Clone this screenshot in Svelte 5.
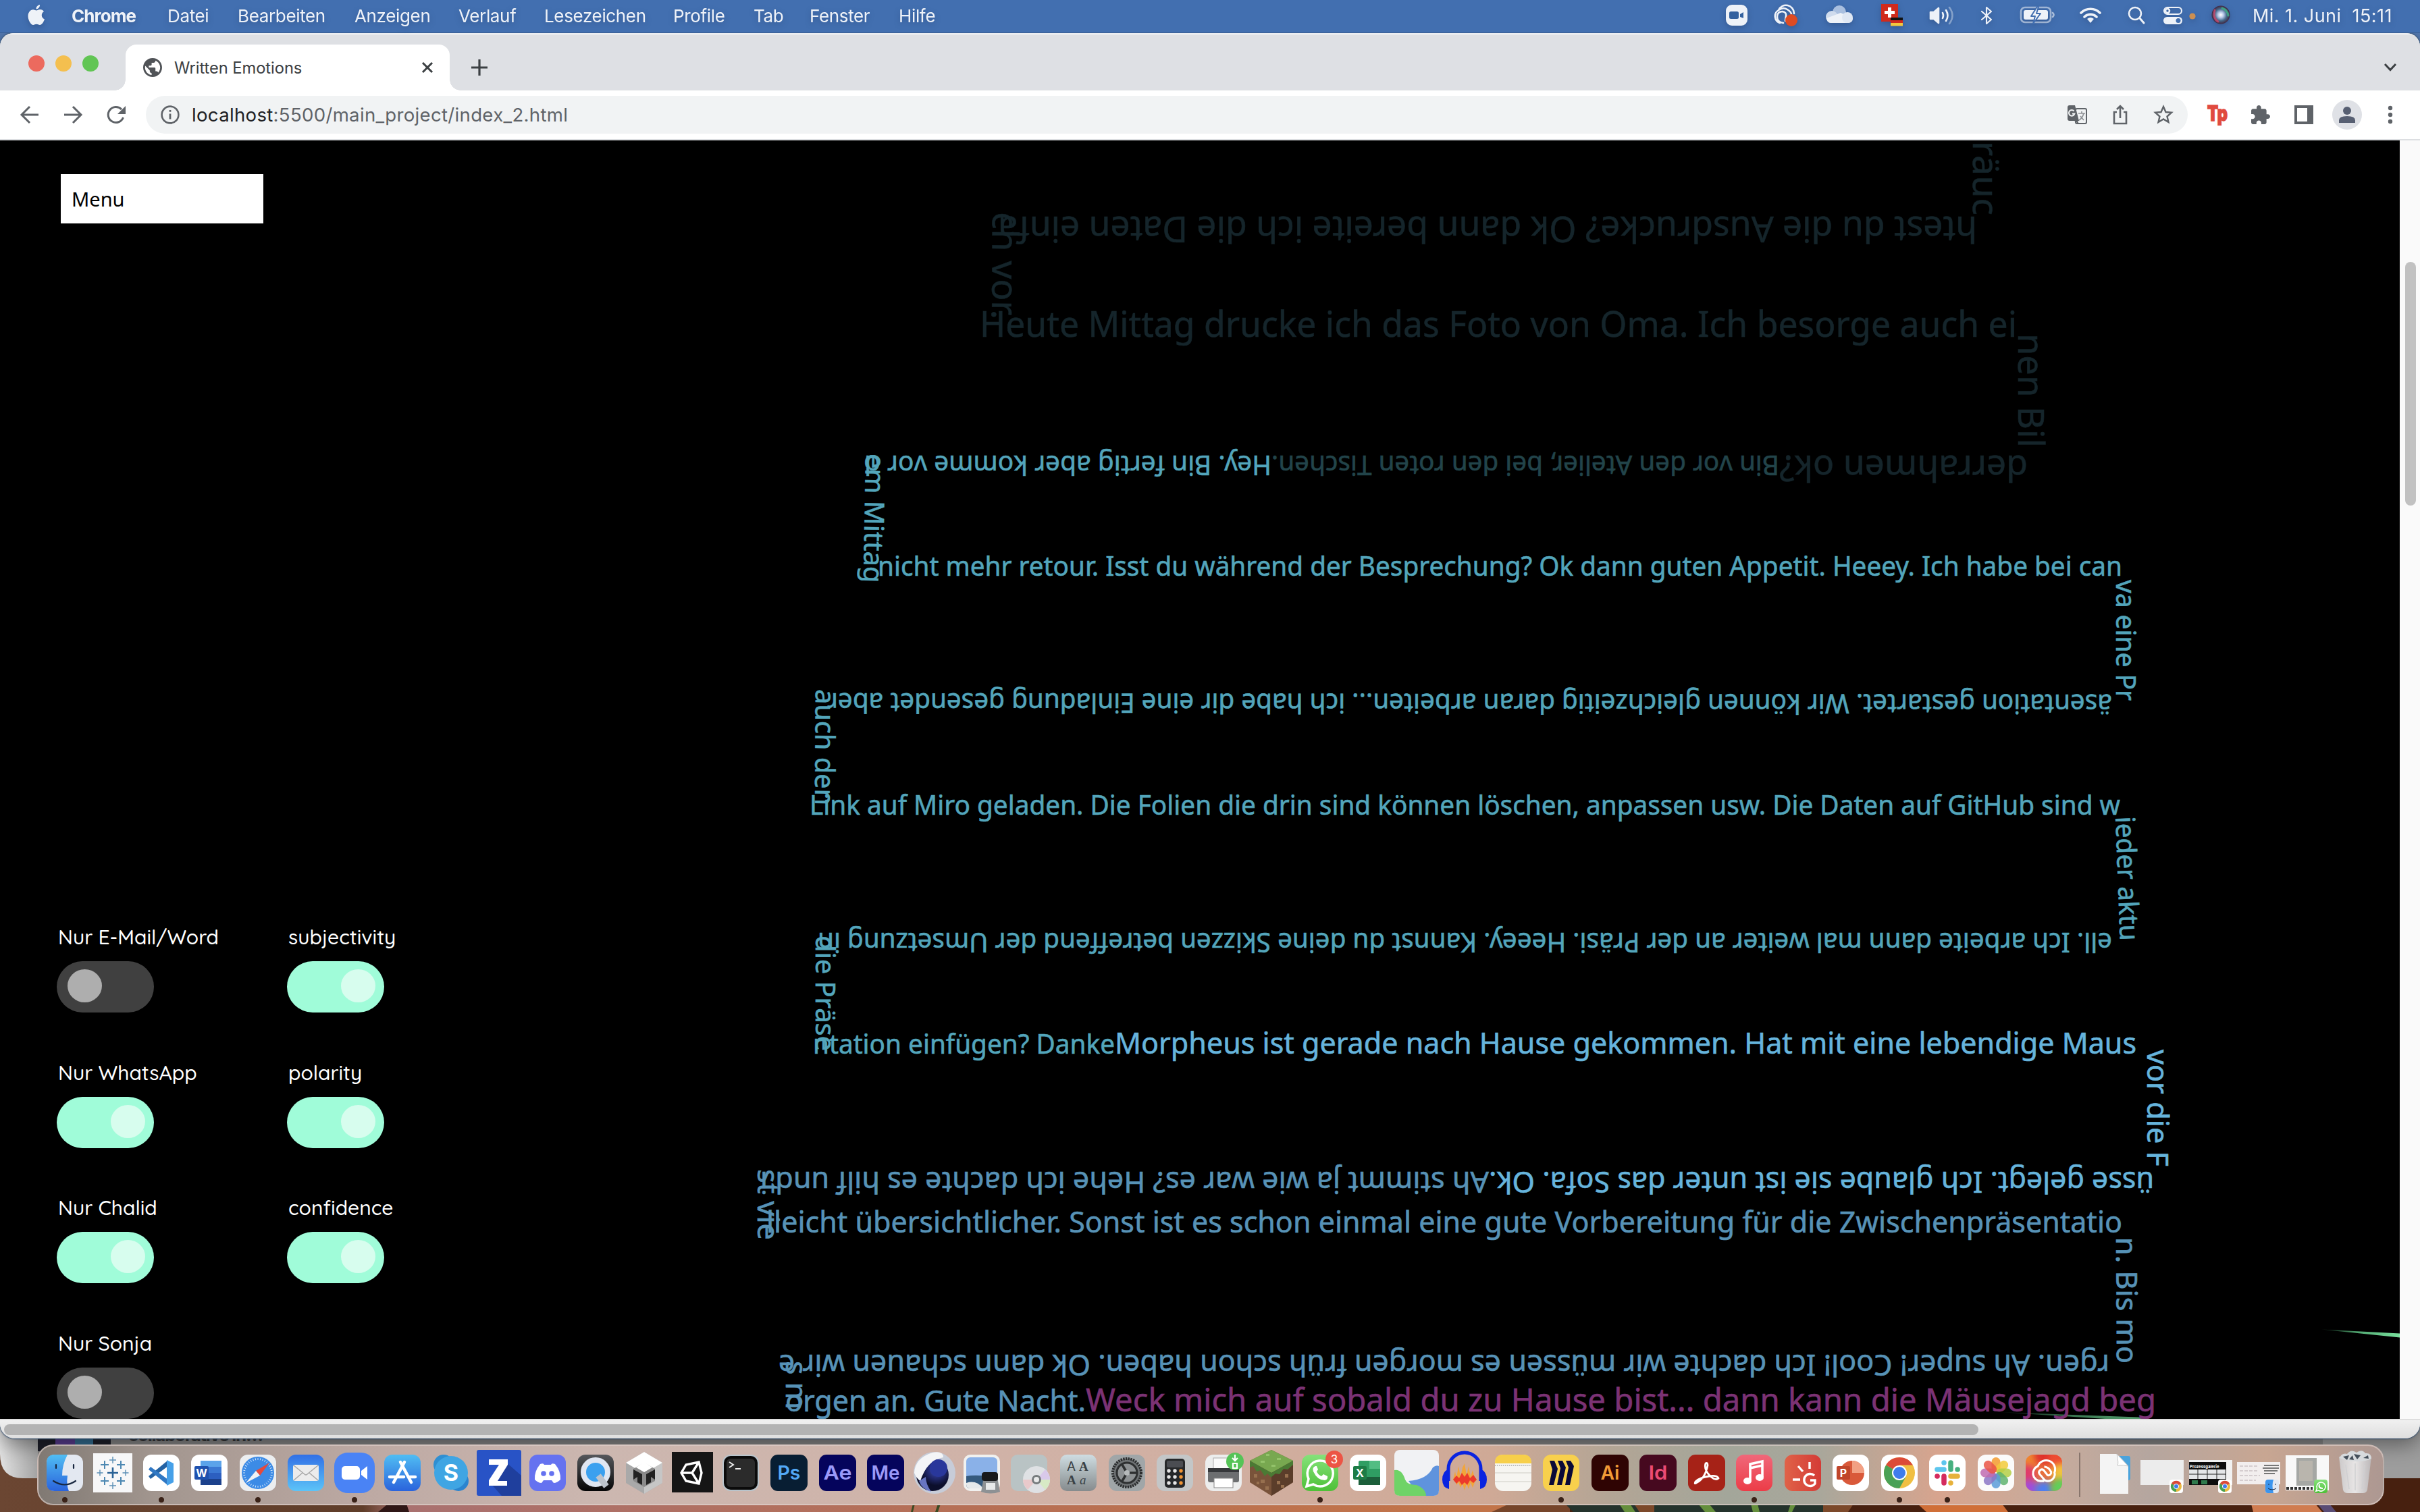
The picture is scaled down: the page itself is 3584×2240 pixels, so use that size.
<script lang="ts">
  const menus = [
    ['Datei', 104], ['Bearbeiten', 173], ['Anzeigen', 154], ['Verlauf', 127], ['Lesezeichen', 191],
    ['Profile', 119], ['Tab', 83], ['Fenster', 132], ['Hilfe', 80],
  ] as [string, number][];

  // Status items, each with the width of its slot
  const status = [
    ['zoom', 64], ['cc', 76], ['cloud', 88], ['flag', 68], ['volume', 78], ['bluetooth', 56],
    ['battery', 94], ['wifi', 64], ['search', 72], ['control', 36], ['dot', 22], ['siri', 62],
  ] as [string, number][];

  const toggles = [
    ['Nur E-Mail/Word', false], ['subjectivity', true],
    ['Nur WhatsApp', true], ['polarity', true],
    ['Nur Chalid', true], ['confidence', true],
    ['Nur Sonja', false],
  ] as [string, boolean][];

  const dark = '#15252b', moss = '#22444a', teal = '#53a5bb', sky = '#66b4dc', steel = '#5792b6', plum = '#7b3274';

  // Text runs on the canvas: start point, end point, size, colour, text
  const runs = [
    [2922, 209, 2922, 319, 53, dark, 'räuc'],
    [2928, 321, 1478, 321, 53, dark, 'htest du die Ausdrucke? Ok dann bereite ich die Daten einfa'],
    [1470, 314, 1469, 473, 53, dark, 'ch vor.'],
    [1451, 499, 2987, 499, 53, dark, 'Heute Mittag drucke ich das Foto von Oma. Ich besorge auch ei'],
    [2989, 494, 2989, 663, 53, dark, 'nen Bil'],
    [3003, 675, 2635, 675, 53, dark, 'derrahmen ok?'],
    [2635, 675, 1883, 675, 40, moss, 'Bin vor den Atelier, bei den roten Tischen.'],
    [1883, 675, 1280, 675, 40, teal, 'Hey. Bin fertig aber komme vor d'],
    [1282, 672, 1279, 863, 40, teal, 'em Mittag'],
    [1300, 853, 3143, 853, 40, teal, 'nicht mehr retour. Isst du während der Besprechung? Ok dann guten Appetit. Heeey. Ich habe bei can'],
    [3134, 859, 3134, 1038, 40, teal, 'va eine Pr'],
    [3128, 1029, 1225, 1027, 40, teal, 'äsentation gestartet. Wir können gleichzeitig daran arbeiten... ich habe dir eine Einladung gesendet aber'],
    [1208, 1021, 1207, 1193, 40, teal, 'auch den'],
    [1199, 1207, 3140, 1207, 40, teal, 'Link auf Miro geladen. Die Folien die drin sind können löschen, anpassen usw. Die Daten auf GitHub sind w'],
    [3133, 1210, 3140, 1394, 40, teal, 'ieder aktu'],
    [3128, 1382, 1211, 1382, 40, teal, 'ell. Ich arbeite dann mal weiter an der Präsi. Heeey. Kannst du deine Skizzen betreffend der Umsetzung in'],
    [1208, 1386, 1208, 1557, 40, teal, 'die Präse'],
    [1204, 1561, 1651, 1561, 40, teal, 'ntation einfügen? Danke'],
    [1651, 1561, 3164, 1561, 43, sky, 'Morpheus ist gerade nach Hause gekommen. Hat mit eine lebendige Maus'],
    [3180, 1555, 3180, 1728, 43, sky, 'vor die F'],
    [3190, 1736, 2205, 1736, 43, sky, 'üsse gelegt. Ich glaube sie ist unter das Sofa. Ok.'],
    [2205, 1736, 1126, 1736, 43, steel, 'Ah stimmt ja wie war es? Hehe ich dachte es hilf und i'],
    [1122, 1732, 1122, 1837, 43, steel, 'st vie'],
    [1135, 1826, 3143, 1826, 43, steel, 'lleicht übersichtlicher. Sonst ist es schon einmal eine gute Vorbereitung für die Zwischenpräsentatio'],
    [3134, 1833, 3135, 2020, 43, steel, 'n. Bis mo'],
    [3124, 2007, 1153, 2007, 43, steel, 'rgen. Ah super! Cool! Ich dachte wir müssen es morgen früh schon haben. Ok dann schauen wir e'],
    [1164, 2016, 1164, 2088, 43, steel, 's m'],
    [1163, 2091, 1608, 2091, 43, steel, 'orgen an. Gute Nacht.'],
    [1608, 2091, 3193, 2091, 48, plum, 'Weck mich auf sobald du zu Hause bist... dann kann die Mäusejagd beg'],
  ].map(([x, y, x2, y2, size, color, text]: any) => ({
    x, y, size, color, text,
    len: Math.hypot(x2 - x, y2 - y),
    angle: (Math.atan2(y2 - y, x2 - x) * 180) / Math.PI,
  }));

  const apps = [
    'finder', 'tableau', 'vscode', 'word', 'safari', 'mail', 'zoom', 'appstore', 'skype', 'zed', 'discord',
    'quicktime', 'unityhub', 'unity', 'terminal', 'Ps', 'Ae', 'Me', 'c4d', 'preview', 'dvd', 'fontbook',
    'settings', 'calc', 'printer', 'minecraft', 'whatsapp', 'excel', 'chart', 'audacity', 'notes', 'miro',
    'Ai', 'Id', 'acrobat', 'music', 'grammar', 'powerpoint', 'chrome', 'slack', 'photos', 'creative',
  ];
  const running = ['finder', 'vscode', 'safari', 'zoom', 'whatsapp', 'miro', 'music', 'chrome', 'slack'];
  const recent = ['file', 'win1', 'win2', 'win3', 'win4', 'trash'];
  const adobe: Record<string, [string, string]> = {
    Ps: ['#081e33', '#52a8f5'], Ae: ['#05045c', '#9a99f8'], Me: ['#05045c', '#9a99f8'],
    Ai: ['#2f0403', '#f29a36'], Id: ['#46091f', '#ec4b73'],
  };
  const ticks = Array.from({ length: 36 }, (_, i) => i * 10);
  const petals = ['#f39a2d', '#f2ca3a', '#b4cf45', '#5fb36f', '#5a9bd8', '#8b76c5', '#c06bb0', '#ea5546'];
  const glows = [
    [12, 12, '#f0862e'], [36, 6, '#e0302c'], [58, 10, '#ee4a30'], [10, 34, '#e03a6a'], [62, 32, '#f2c23c'],
    [14, 56, '#a44ad8'], [36, 58, '#4f7df0'], [60, 54, '#5fd05a'],
  ] as [number, number, string][];
  const crosses = [
    [36, 32, 8, '#2a6295', 2.6], [24, 20, 6, '#4d88b2', 2], [48, 20, 6, '#4d88b2', 2], [24, 44, 6, '#4d88b2', 2], [48, 44, 6, '#4d88b2', 2],
    [36, 13, 5, '#5b8fb5', 1.4], [36, 51, 5, '#5b8fb5', 1.4], [17, 32, 4.5, '#5b8fb5', 1.4], [55, 32, 4.5, '#5b8fb5', 1.4],
  ] as [number, number, number, string, number][];
</script>

<div class="desktop">
  <svg class="wallpaper" viewBox="0 0 3584 2240" aria-hidden="true">
    <defs>
      <linearGradient id="ground"><stop offset="0" stop-color="#6b4632" /><stop offset=".15" stop-color="#5f3d29" /><stop offset=".166" stop-color="#a97170" /><stop offset=".4" stop-color="#b66f55" /><stop offset=".6" stop-color="#c27449" /></linearGradient>
      <linearGradient id="behind" x2="1"><stop offset="0" stop-color="#e2e2e2" /><stop offset="1" stop-color="#a2a2a2" /></linearGradient>
      <linearGradient id="blue" x2="0" y2="1"><stop offset="0" stop-color="#50bdf3" /><stop offset="1" stop-color="#2a63dc" /></linearGradient>
      <linearGradient id="blueUp" x2="0" y2="1"><stop offset="0" stop-color="#3270e6" /><stop offset="1" stop-color="#5cc4f8" /></linearGradient>
      <linearGradient id="steelGrad" x2="0" y2="1"><stop offset="0" stop-color="#cfdde2" /><stop offset="1" stop-color="#858b8d" /></linearGradient>
      <linearGradient id="black" x2="0" y2="1"><stop offset="0" stop-color="#56585c" /><stop offset="1" stop-color="#050506" /></linearGradient>
      <linearGradient id="green" x2="0" y2="1"><stop offset="0" stop-color="#86e27b" /><stop offset="1" stop-color="#4dc037" /></linearGradient>
      <linearGradient id="red" x2="0" y2="1"><stop offset="0" stop-color="#f0687a" /><stop offset="1" stop-color="#ec3c47" /></linearGradient>
      <linearGradient id="coral" x2="1"><stop offset="0" stop-color="#e06248" /><stop offset="1" stop-color="#d43b36" /></linearGradient>
      <radialGradient id="orb" cx=".62" cy=".35" r=".6"><stop offset="0" stop-color="#6f83e8" /><stop offset=".35" stop-color="#27307e" /><stop offset=".8" stop-color="#0c0f2c" /></radialGradient>
      <radialGradient id="siri"><stop offset="0" stop-color="#fff" /><stop offset=".3" stop-color="#b9c9e8" /><stop offset=".65" stop-color="#456a8c" /><stop offset="1" stop-color="#41263f" /></radialGradient>
      <linearGradient id="streak"><stop offset="0" stop-color="#5fd08a" stop-opacity=".15" /><stop offset=".5" stop-color="#6ad893" stop-opacity=".8" /><stop offset="1" stop-color="#78e09c" /></linearGradient>
      <linearGradient id="trash" x2="1"><stop offset="0" stop-color="#cfcfd1" /><stop offset=".5" stop-color="#eeeeef" /><stop offset="1" stop-color="#bdbbbd" /></linearGradient>
      <clipPath id="tile"><rect x="9" y="5" width="54" height="54" rx="12" /></clipPath>
      <filter id="soft" x="-50%" y="-50%" width="200%" height="200%"><feGaussianBlur stdDeviation="5" /></filter>
    </defs>
    <rect width="3584" height="2240" fill="url(#ground)" />
    <path d="M560 2240L596 2210L606 2240Z" fill="#2f1716" />
    <path d="M1352 2228h3l-3 12h-3zM1389 2228h4l-4 12h-4z" fill="#3b4a22" />
    <path d="M2209 2240L2235 2228H2330V2240Z" fill="#76452a" />
    <rect x="2325" y="2190" width="1259" height="50" fill="#47200f" />
    <path d="M2318 2228H2700V2240H2330Z" fill="#24332c" />
    <path d="M2398 2228h16l8 12h-16zM2515 2228h16l10 12h-16zM2593 2228h10l3 12h-10zM2652 2228h8l-6 12h-6z" fill="#658f3c" />
    <path d="M2420 2228h30v12h-22zM2700 2228h45l-8 12h-37z" fill="#7c492a" />
    <path d="M2840 2228h125l9 12h-121z" fill="#d06f38" />
    <path d="M3334 2228h95l10 12h-102z" fill="#d07c50" />
    <path d="M3432 2228h18l10 12h-18z" fill="#5a4c75" />
    <rect x="0" y="22" width="3584" height="60" fill="#5379b0" />
    <path d="M0 2080H56V2190H34Q0 2190 0 2154Z" fill="url(#behind)" />
    <rect x="56" y="2080" width="3528" height="110" fill="#838383" />
    <rect x="3440" y="2080" width="144" height="110" fill="#9d9d9d" />
    <rect x="56" y="2080" width="108" height="70" fill="#1d1e28" />
    <rect x="82" y="2120" width="29" height="30" fill="#563a8c" /><rect x="111" y="2120" width="27" height="30" fill="#326a8d" />
    <text x="190" y="2135" font-size="26" font-weight="700" fill="#333" textLength="200">collaborative in…</text>
  </svg>

  <header class="menubar">
    <svg class="apple" viewBox="0 0 28 34"><path fill="#eef2f8" d="M19 1c.3 3-2.300 6.500-5.500 6.500C13.200 4.500 16 1.300 19 1zM14 9.500c1.300 0 3-1.500 5.500-1.500 2.200 0 4.300 1.200 5.500 3-4.800 3-4 9.500 1 11.500-1 3-3.700 8.500-7 8.500-2 0-2.800-1.200-5-1.200S11 31 9.200 31C5.500 31 1.500 23.500 1.500 18c0-5.800 3.600-9.800 7.500-9.800 2.200 0 3.800 1.300 5 1.300z" /></svg>
    <b>Chrome</b>
    {#each menus as [label, w]}<span class="menu" style:width="{w}px">{label}</span>{/each}
    <div class="status">
      {#each status as [name, w]}
        <svg width={w} height="50" viewBox="{-w / 2} -25 {w} 50" fill="none" stroke="#eef2f8" stroke-width="2.600" stroke-linecap="round" stroke-linejoin="round">
          {#if name === 'zoom'}
            <rect x="-16" y="-16" width="32" height="31" rx="9" fill="#eef2f8" stroke="none" /><rect x="-11" y="-6" width="14" height="11" rx="2.500" fill="#33619f" stroke="none" /><path d="M5-2L10-5V4L5 2Z" fill="#33619f" stroke="none" />
          {:else if name === 'cc'}
            <path d="M-6 11A10.500 10.500 0 0 1-8-8A12 12 0 0 1 15-3M-1 11Q-10 10-10 2T-2-6Q4-5 3 1T2 8M-8-8Q-1-13 5-9T11-2" /><circle cx="11" cy="7" r="9" fill="#de4b22" stroke="none" />
          {:else if name === 'cloud'}
            <g stroke="none"><circle cx="0" cy="-5" r="10" fill="#a9bfdf" /><circle cx="-11" cy="2" r="9" fill="#cfdbed" /><path d="M-19 4L2-4L20 4Q20 11 13 11H-13Q-18 11-19 4Z" fill="#eef2f8" /><circle cx="12" cy="3" r="8" fill="#dfe7f3" /></g>
          {:else if name === 'flag'}
            <g stroke="none"><rect x="-16" y="-17" width="25" height="26" fill="#d02a1c" /><path d="M-6-12h5v5h5v5h-5v5h-5v-5h-5v-5h5z" fill="#fff" /><rect x="-2" y="3" width="18" height="4.500" fill="#111" /><rect x="-2" y="7" width="18" height="4.500" fill="#cf2a1e" /><rect x="-2" y="11" width="18" height="4.500" fill="#f3c83e" /></g>
          {:else if name === 'volume'}
            <path d="M-16-5H-11L-4-11V11L-11 5H-16Z" fill="#eef2f8" /><path d="M2-4Q4 0 2 4M7-8Q12 0 7 8" /><path d="M12-12Q21 0 12 12" opacity=".4" />
          {:else if name === 'bluetooth'}
            <path d="M-7-6L7 6L0 12V-12L7-6L-7 6" stroke-width="2.200" />
          {:else if name === 'battery'}
            <rect x="-24" y="-12" width="44" height="22" rx="6" stroke-opacity=".55" /><rect x="-20" y="-8" width="36" height="14" rx="3" fill="#eef2f8" stroke="none" /><path d="M23-4Q26-1 23 2" stroke-opacity=".6" /><path d="M0-13L-9 1H-3L-6 12L5-3H-1L2-13Z" fill="#eef2f8" stroke="#426fb0" stroke-width="2" />
          {:else if name === 'wifi'}
            <path d="M-14-4A20 20 0 0 1 14-4M-9 2A13 13 0 0 1 9 2" stroke-width="3.600" /><path d="M0 11L-5 5Q0 1 5 5Z" fill="#eef2f8" stroke="none" />
          {:else if name === 'search'}
            <circle cx="-2" cy="-3" r="9" /><path d="M5 4L11 11" stroke-width="3" />
          {:else if name === 'control'}
            <rect x="-13" y="-12" width="26" height="10" rx="5" stroke-width="2.200" /><circle cx="-8" cy="-7" r="3" /><rect x="-14" y="2" width="28" height="11" rx="5.500" fill="#eef2f8" stroke="none" /><circle cx="8" cy="7.500" r="3.500" fill="#426fb0" stroke="none" />
          {:else if name === 'dot'}
            <circle cx="0" cy="1" r="4.600" fill="#cc8f51" stroke="none" />
          {:else}
            <circle cx="0" cy="-1" r="13.500" fill="url(#siri)" stroke="none" /><path d="M-9-8Q-12 4-4 9" stroke="#e0456b" stroke-width="3" opacity=".7" /><path d="M2-11Q10-8 11 0" stroke="#3fbf8a" stroke-width="3" opacity=".7" />
          {/if}
        </svg>
      {/each}
      <span class="clock"><span>Mi. 1. Juni</span><span>15:11</span></span>
    </div>
  </header>

  <main class="window">
    <div class="tabs">
      <div class="lights"><i class="close"></i><i class="min"></i><i class="max"></i></div>
      <div class="tab">
        <svg width="28" height="28" viewBox="2 2 20 20"><path fill="#505357" d="M12 2C6.480 2 2 6.480 2 12s4.480 10 10 10 10-4.480 10-10S17.520 2 12 2zm-1 17.930c-3.950-.490-7-3.850-7-7.930 0-.620.080-1.210.210-1.790L9 15v1c0 1.100.900 2 2 2v1.930zm6.900-2.540c-.260-.810-1-1.390-1.900-1.390h-1v-3c0-.550-.450-1-1-1H8v-2h2c.550 0 1-.450 1-1V7h2c1.100 0 2-.900 2-2v-.410c2.930 1.190 5 4.060 5 7.410 0 2.080-.800 3.970-2.100 5.390z" /></svg>
        <span>Written Emotions</span>
        <svg class="x" width="18" height="18" viewBox="0 0 18 18"><path d="M2 2L16 16M16 2L2 16" stroke="#3c4043" stroke-width="3" /></svg>
      </div>
      <svg class="plus" width="26" height="26" viewBox="0 0 26 26"><path d="M13 1V25M1 13H25" stroke="#3c4043" stroke-width="3.200" /></svg>
      <svg class="chev" width="20" height="14" viewBox="0 0 20 14"><path d="M2 2L10 10.500L18 2" stroke="#3c4043" stroke-width="3" fill="none" /></svg>
    </div>

    <div class="toolbar">
      <svg class="nav" viewBox="-32 -32 64 64"><path d="M13 0H-12M0-12L-12 0L0 12" /></svg>
      <svg class="nav" viewBox="-32 -32 64 64"><path d="M-13 0H12M0-12L12 0L0 12" /></svg>
      <svg class="nav" viewBox="-32 -32 64 64"><path d="M10.500 4A11.500 11.500 0 1 1 8-8" /><path d="M14-13V-1H2Z" fill="#5f6368" stroke="none" /></svg>
      <div class="omnibox">
        <svg width="28" height="28" viewBox="0 0 28 28"><circle cx="14" cy="14" r="12.400" fill="none" stroke="#5f6368" stroke-width="2.600" /><path d="M14 12.500V20.500M14 7V9.800" stroke="#5f6368" stroke-width="2.800" /></svg>
        <span class="url"><em>localhost</em>:5500/main_project/index_2.html</span>
        <svg class="act" viewBox="-32 -32 64 64"><rect x="-2" y="-9" width="16" height="22" rx="2" fill="none" stroke="#5f6368" stroke-width="2" /><path d="M-11-14H-3L3 9H-11Q-14 9-14 6V-11Q-14-14-11-14Z" fill="#5f6368" stroke="none" /><path d="M1 9H-4L3 14Z" fill="#5f6368" stroke="none" /><path d="M-4.500-5.500A4.300 4.300 0 1 0-3.600-1.500H-7" stroke="#f1f3f4" stroke-width="2" /><path d="M2-2H12M7-5V-2M10-2Q8 5 3 8M5 2L10 8" stroke-width="1.700" class="gt" /></svg>
        <svg class="act" viewBox="-32 -32 64 64"><path d="M-5-4H-9V13H9V-4H5M0 5V-12M-5-8L0-13L5-8" stroke-width="2.600" /></svg>
        <svg class="act" viewBox="-32 -32 64 64"><path d="M0-12L3.500-4L12-3.200L5.500 2.500L7.500 11L0 6.500L-7.500 11L-5.500 2.500L-12-3.200L-3.500-4Z" stroke-width="2.400" /></svg>
      </div>
      <svg class="act" viewBox="-32 -32 64 64"><text x="-15" y="9" font-size="31" font-weight="900" fill="#e04a3f" stroke="#e04a3f" stroke-width="1.500" textLength="30" lengthAdjust="spacingAndGlyphs">Tp</text></svg>
      <svg class="act" viewBox="-32 -32 64 64"><path fill="#5f6368" stroke="none" transform="scale(1.330) translate(-12.500 -11.500)" d="M20.500 11H19V7c0-1.100-.900-2-2-2h-4V3.500C13 2.120 11.880 1 10.500 1S8 2.120 8 3.500V5H4c-1.100 0-1.990.900-1.990 2v3.800H3.500c1.490 0 2.700 1.210 2.700 2.700s-1.210 2.700-2.700 2.700H2V20c0 1.100.900 2 2 2h3.800v-1.500c0-1.490 1.210-2.700 2.700-2.700 1.490 0 2.700 1.210 2.700 2.700V22H17c1.100 0 2-.900 2-2v-4h1.500c1.380 0 2.500-1.120 2.500-2.500S21.880 11 20.500 11z" /></svg>
      <svg class="act" viewBox="-32 -32 64 64"><path fill="#5f6368" fill-rule="evenodd" stroke="none" d="M-14-14H14V14H-14ZM-10-10V10H5V-10Z" /></svg>
      <svg class="act" viewBox="-32 -32 64 64"><circle r="22" fill="#dfe1e6" stroke="none" /><circle cy="-6" r="6" fill="#575f72" stroke="none" /><path d="M-12 12V8Q-12 2 0 2T12 8V12Z" fill="#575f72" stroke="none" /></svg>
      <svg class="act" viewBox="-32 -32 64 64"><g fill="#5f6368" stroke="none"><circle cy="-10" r="3.200" /><circle r="3.200" /><circle cy="10" r="3.200" /></g></svg>
    </div>

    <div class="view">
      <section class="page">
        <svg class="canvas" viewBox="0 208 3554 1894">
          <path d="M3438 1969.500L3554 1975.500V1981.500Z" fill="url(#streak)" />
          <path d="M2962 2092L3180 2100V2106Z" fill="url(#streak)" opacity=".7" />
          {#each runs as r}
            <text transform="translate({r.x} {r.y}) rotate({r.angle})" font-size={r.size} fill={r.color} stroke={r.color} stroke-width=".6" textLength={r.len} lengthAdjust="spacingAndGlyphs">{r.text}</text>
          {/each}
        </svg>
        <aside class="panel">
          <div class="select">Menu</div>
          <div class="switches">
            {#each toggles as [label, on]}
              <div class="switch" class:on>
                <span>{label}</span>
                <div class="track"><i></i></div>
              </div>
            {/each}
          </div>
        </aside>
      </section>
      <div class="vbar"><i></i></div>
    </div>
    <div class="hbar"><i></i></div>
  </main>

  <nav class="dock">
    {#each apps as app}
      <div class="app">
        <svg width="72" height="64" viewBox="0 0 72 64">
          {#if adobe[app]}
            <rect x="9" y="5" width="55" height="54" rx="11" fill={adobe[app][0]} /><text x="36.500" y="42" text-anchor="middle" font-size="29" font-weight="600" fill={adobe[app][1]} textLength={app[1] === 'e' ? 42 : app[1] === 's' ? 34 : 28} lengthAdjust="spacingAndGlyphs">{app}</text>
          {:else if app === 'finder'}
            <rect x="9" y="5" width="54" height="54" rx="12" fill="#e3e8f1" /><path d="M21 5H40Q32 20 32 36H40Q38 50 42 59H21Q9 59 9 47V17Q9 5 21 5Z" fill="url(#blue)" /><path d="M23 20V25M49 20V25M19 44Q36 55 52 44" fill="none" stroke="#17263f" stroke-width="2.200" stroke-linecap="round" />
          {:else if app === 'tableau'}
            <rect x="7" y="3" width="58" height="58" fill="#f7f7f8" />
            {#each crosses as [x, y, r, c, w]}<path d="M{x - r} {y}H{x + r}M{x} {y - r}V{y + r}" stroke={c} stroke-width={w} />{/each}
          {:else if app === 'vscode'}
            <rect x="9" y="5" width="54" height="54" rx="12" fill="#fff" /><path d="M45 14L17 37L20 41L46 22Z" fill="#2362a3" /><path d="M45 50L17 27L20 23L46 42Z" fill="#3078c4" /><path d="M44 13L54 18V46L44 51Z" fill="#46a0e8" />
          {:else if app === 'word'}
            <rect x="9" y="5" width="54" height="54" rx="12" fill="#fff" /><rect x="23" y="14" width="31" height="36" rx="2" fill="#2c5fc0" /><rect x="23" y="14" width="31" height="9" fill="#5ba3ea" /><rect x="23" y="23" width="31" height="9" fill="#3b78d3" /><rect x="23" y="41" width="31" height="9" fill="#1c418c" /><rect x="14" y="22" width="21" height="20" rx="2" fill="#1f51ae" /><text x="24.500" y="38" text-anchor="middle" font-size="16" font-weight="700" fill="#fff">W</text>
          {:else if app === 'safari'}
            <rect x="9" y="5" width="54" height="54" rx="12" fill="#eceef0" /><circle cx="36" cy="32" r="24" fill="#3c8be6" />
            {#each ticks as a}<path d="M36 10V13" stroke="#d9eafc" stroke-width=".9" transform="rotate({a} 36 32)" />{/each}
            <path d="M53 17L39 36L33 29Z" fill="#e6493c" /><path d="M18 47L33 29L39 36Z" fill="#f1f2f4" />
          {:else if app === 'mail'}
            <rect x="9" y="5" width="54" height="54" rx="12" fill="url(#blueUp)" /><rect x="17" y="20" width="38" height="24" rx="3" fill="#ececec" /><path d="M18 21L34 34Q36 36 38 34L54 21M18 43L31 32M54 43L41 32" fill="none" stroke="#a8a8a8" stroke-width="1.500" />
          {:else if app === 'zoom'}
            <rect x="6" y="2" width="60" height="60" rx="20" fill="#4a83f5" /><rect x="17" y="22" width="27" height="20" rx="5" fill="#fff" /><path d="M46 29L55 22V42L46 35Z" fill="#fff" />
          {:else if app === 'appstore'}
            <rect x="9" y="5" width="54" height="54" rx="12" fill="url(#blue)" /><path d="M39 16L23 46M33 16L49 46M17 38H38M45 38H55" stroke="#fff" stroke-width="4.500" stroke-linecap="round" />
          {:else if app === 'skype'}
            <circle cx="25" cy="20" r="15" fill="#2f8fd2" /><circle cx="47" cy="44" r="15" fill="#2a84cf" /><circle cx="36" cy="32" r="25" fill="#3fa5e3" /><text x="36" y="44" text-anchor="middle" font-size="34" font-weight="700" fill="#fff">S</text>
          {:else if app === 'zed'}
            <rect x="3" y="-2" width="66" height="68" rx="3" fill="#2853c6" /><path d="M44 14L69 36V66H40L24 48Z" fill="#1f3f9d" /><path d="M21 12H49V20L34 44H48V51H21V43L36 20H21Z" fill="#fff" />
          {:else if app === 'discord'}
            <rect x="9" y="5" width="54" height="54" rx="12" fill="#6572f0" /><path d="M25 19Q30 17 31 20H41Q42 17 47 19Q56 30 55 42Q50 47 45 47L42 43H30L27 47Q22 47 17 42Q16 30 25 19Z" fill="#fff" /><circle cx="30" cy="33" r="3.800" fill="#6572f0" /><circle cx="42" cy="33" r="3.800" fill="#6572f0" />
          {:else if app === 'quicktime'}
            <rect x="9" y="5" width="54" height="54" rx="12" fill="url(#black)" /><circle cx="36" cy="31" r="18" fill="#3aa0ef" stroke="#dfe6f2" stroke-width="8" /><path d="M40 36L52 52" stroke="#bcc3cc" stroke-width="9" />
          {:else if app === 'unityhub'}
            <path d="M36 1L63 17V47L36 63L9 47V17Z" fill="#a9a9a9" /><path d="M36 33L63 17V47L36 63Z" fill="#c6c6c6" /><path d="M36 1L63 17L36 33L9 17Z" fill="#fff" /><path d="M36 17L52 26V44L36 53L20 44V26Z" fill="#8a8a8a" /><path d="M36 16L48 24L36 31L24 24Z" fill="#fff" /><path d="M20 27L33 34V50L26 46V38L20 42ZM52 27L39 34V50L46 46V38L52 42Z" fill="#222" />
          {:else if app === 'unity'}
            <rect x="6" y="1" width="61" height="60" fill="#151515" /><path d="M20 32L27 20L46 16L50 32L46 48L27 44ZM20 32H36M36 32L46 16M36 32L46 48" fill="none" stroke="#fff" stroke-width="3.400" />
          {:else if app === 'terminal'}
            <rect x="9" y="5" width="54" height="54" rx="12" fill="#b9c4cb" /><rect x="11" y="7" width="50" height="50" rx="10" fill="#0b0b0b" /><rect x="15" y="11" width="42" height="42" rx="6" fill="#2b2b2b" /><path d="M19 16L25 20L19 24M28 26H36" fill="none" stroke="#eee" stroke-width="2" />
          {:else if app === 'c4d'}
            <circle cx="37" cy="32" r="31" fill="#c7ccd8" /><circle cx="34" cy="35" r="24" fill="url(#orb)" /><path d="M7 32Q8 10 34 2Q50-1 50 9Q26 13 16 44Q10 40 7 32Z" fill="#f4f5f7" /><path d="M14 44Q18 56 32 60Q24 48 24 38Z" fill="#7f8ee8" opacity=".8" /><circle cx="43" cy="25" r="13" fill="#29379b" />
          {:else if app === 'preview'}
            <rect x="9" y="5" width="54" height="54" rx="10" fill="#f1f1ef" /><rect x="13" y="9" width="46" height="46" rx="6" fill="#8ab1e8" /><path d="M13 37Q25 34 59 38V49Q59 55 53 55H19Q13 55 13 49Z" fill="#355a7e" /><path d="M13 47Q28 42 38 55H19Q13 55 13 49Z" fill="#e6e9ea" /><path d="M37 34H60V44L63 60Q49 65 35 60L38 44Z" fill="#8d9194" /><rect x="36" y="31" width="24" height="13" rx="4" fill="#18191b" /><rect x="42" y="47" width="14" height="10" fill="#e7e9ea" />
          {:else if app === 'dvd'}
            <rect x="7" y="5" width="54" height="54" rx="10" fill="#b9c3c4" /><circle cx="45" cy="42" r="20" fill="#dfe1e4" /><path d="M45 42L58 27Q65 34 65 42Z" fill="#d9c9ea" /><path d="M45 42L32 57Q25 50 25 42Z" fill="#e9c9cb" /><path d="M45 42L58 57Q65 50 65 42Z" fill="#d7eac5" /><circle cx="45" cy="42" r="7" fill="#777c7e" /><circle cx="45" cy="42" r="4" fill="#e9eaea" />
          {:else if app === 'fontbook'}
            <rect x="9" y="5" width="54" height="54" rx="10" fill="url(#steelGrad)" /><g font-size="19" fill="#3b4246"><text x="19" y="29">A</text><text x="37" y="29" font-weight="700" font-family="Liberation Serif, serif">A</text><text x="19" y="49" font-weight="700" font-family="Liberation Serif, serif">A</text><text x="38" y="49" font-style="italic" font-family="Liberation Serif, serif">a</text></g>
          {:else if app === 'settings'}
            <rect x="9" y="5" width="54" height="54" rx="12" fill="#a0a6a8" /><circle cx="36" cy="32" r="21" fill="#6f7375" stroke="#2a2c2d" stroke-width="4" stroke-dasharray="2.400 1.300" /><circle cx="36" cy="32" r="15" fill="#8d9193" stroke="#2e3031" stroke-width="3" /><path d="M36 32L50 32M36 32L29 20M36 32L29 44" stroke="#2e3031" stroke-width="3.500" /><circle cx="36" cy="32" r="4" fill="#b5b9ba" />
          {:else if app === 'calc'}
            <rect x="9" y="5" width="54" height="54" rx="12" fill="#c3c6c7" /><rect x="21" y="11" width="30" height="43" rx="5" fill="#26282a" /><rect x="24" y="14" width="24" height="10" rx="2" fill="#4b4d52" />
            {#each [29, 38, 47] as y}<circle cx="27" cy={y} r="2.700" fill="#e6e6e6" /><circle cx="36" cy={y} r="2.700" fill="#e6e6e6" /><circle cx="45" cy={y} r="2.700" fill="#f09536" />{/each}
          {:else if app === 'printer'}
            <rect x="9" y="5" width="54" height="54" rx="12" fill="#eceded" /><rect x="21" y="10" width="30" height="18" fill="#fafafa" stroke="#aaa" /><rect x="13" y="25" width="46" height="21" rx="3" fill="#6c6e70" /><rect x="13" y="25" width="46" height="6" fill="#35373a" /><rect x="22" y="40" width="28" height="14" fill="#fff" stroke="#888" /><circle cx="53" cy="15" r="13" fill="#55c457" /><path d="M53 5V14M49 10L53 14L57 10M50 18H56V25H50Z" stroke="#fff" stroke-width="2.200" fill="none" />
          {:else if app === 'minecraft'}
            <path d="M36-2L68 14V46L36 66L4 46V14Z" fill="#79533a" /><path d="M36 32L68 14V46L36 66Z" fill="#5b3d2a" /><path d="M36-2L68 14L36 32L4 14Z" fill="#78a850" /><path d="M4 14L36 32V39L30 33L26 37L20 28L14 30L9 22L4 24ZM68 14L36 32V38L42 33L48 34L54 26L60 27L68 20Z" fill="#4b7a34" /><path d="M10 34h5v5h-5zM20 42h6v5h-6zM14 45h4v4h-4zM27 52h5v5h-5zM44 44h5v5h-5zM56 34h5v5h-5zM50 50h5v4h-5z" fill="#97704f" /><path d="M28 4h5v3h-5zM44 10h6v3h-6zM20 14h6v3h-6zM36 20h6v3h-6z" fill="#94c36b" />
          {:else if app === 'whatsapp'}
            <rect x="9" y="5" width="54" height="54" rx="12" fill="url(#green)" /><path d="M16 52L19 41A19 19 0 1 1 26 49Z" fill="none" stroke="#fff" stroke-width="3.500" /><path d="M29 22Q24 24 26 30Q32 43 43 43Q48 42 47 37L41 34L38 37Q33 35 31 30L33 27L31 22Z" fill="#fff" /><circle cx="57" cy="12" r="13" fill="#ec5545" /><text x="57" y="18" text-anchor="middle" font-size="17" fill="#fff">3</text>
          {:else if app === 'excel'}
            <rect x="9" y="5" width="54" height="54" rx="12" fill="#fff" /><rect x="22" y="14" width="32" height="36" rx="2" fill="#2f9e63" /><rect x="38" y="14" width="16" height="12" fill="#52bd83" /><rect x="22" y="38" width="32" height="12" fill="#1c5f3b" /><rect x="14" y="22" width="20" height="20" rx="2" fill="#1d7c46" /><text x="24" y="38" text-anchor="middle" font-size="16" font-weight="700" fill="#fff">X</text>
          {:else if app === 'chart'}
            <rect x="3" y="-2" width="66" height="68" rx="8" fill="#f1f2f4" /><path d="M69 22V58Q69 66 61 66H40L24 44Q52 42 60 24Q65 20 69 22Z" fill="#5f93dd" /><path d="M3 28Q14 26 19 42Q22 50 36 50Q50 56 50 66H11Q3 66 3 58Z" fill="#6fd367" />
          {:else if app === 'audacity'}
            <path d="M12 44V26A24 24 0 0 1 60 26V44" fill="none" stroke="#0a24e0" stroke-width="5" /><path d="M13 26Q3 30 3 42T13 56ZM59 26Q69 30 69 42T59 56Z" fill="#0a24e0" /><path d="M19 42L22 30L24 40L27 22L30 38L33 24L36 18L39 36L42 22L45 38L48 28L51 40L54 42L51 46L48 54L45 46L42 56L39 48L36 58L33 48L30 54L27 46L24 50L22 44Z" fill="#f2a53a" /><path d="M19 42L24 36L28 40L32 32L36 38L40 32L44 40L49 35L54 42L49 47L44 43L40 50L36 46L32 50L28 44L24 48Z" fill="#ec3a2b" />
          {:else if app === 'notes'}
            <rect x="9" y="5" width="54" height="54" rx="12" fill="#f6f5f1" /><path d="M9 18V17Q9 5 21 5H51Q63 5 63 17V18Z" fill="#f7cf4a" /><path d="M9 21H63" stroke="#aaa" stroke-width="1.500" stroke-dasharray="1.500 1.500" /><path d="M9 32H63M9 45H63" stroke="#dcdad4" stroke-width="1.400" />
          {:else if app === 'miro'}
            <rect x="9" y="5" width="54" height="54" rx="12" fill="#f8d04c" /><path d="M19 14H26L31 26L25 50H18L23 27ZM31 14H38L43 24L37 50H30L35 25ZM43 14H50L55 22L49 50H42L47 24Z" fill="#0a0938" />
          {:else if app === 'acrobat'}
            <rect x="9" y="5" width="55" height="54" rx="11" fill="#a62217" /><path d="M21 47Q34 41 38 21Q38 16 35 18Q32 27 42 37Q50 44 54 40Q52 35 40 37Q26 39 20 45Q18 49 21 47Z" fill="none" stroke="#fff" stroke-width="2.800" />
          {:else if app === 'music'}
            <rect x="9" y="5" width="54" height="54" rx="12" fill="url(#red)" /><path d="M30 43V19L48 15V38M30 25L48 21" fill="none" stroke="#fff" stroke-width="3.600" /><ellipse cx="26" cy="44" rx="6" ry="5" fill="#fff" /><ellipse cx="44" cy="39" rx="6" ry="5" fill="#fff" />
          {:else if app === 'grammar'}
            <rect x="9" y="5" width="54" height="54" rx="12" fill="url(#coral)" /><path d="M53 36A9 9 0 1 0 54 48V43H47M46 16V26M29 22L36 30M21 42H32" fill="none" stroke="#fff" stroke-width="3.400" />
          {:else if app === 'powerpoint'}
            <rect x="9" y="5" width="54" height="54" rx="12" fill="#fff" /><circle cx="38" cy="32" r="18" fill="#d9593a" /><path d="M38 14A18 18 0 0 1 56 32H38Z" fill="#f2a083" /><rect x="15" y="22" width="20" height="20" rx="2" fill="#c0452a" /><text x="25" y="38" text-anchor="middle" font-size="16" font-weight="700" fill="#fff">P</text>
          {:else if app === 'chrome'}
            <rect x="9" y="5" width="54" height="54" rx="12" fill="#fff" /><circle cx="36" cy="32" r="23" fill="#f0bf42" /><path d="M36 32L16.100 20.500A23 23 0 0 1 56 20.500H36Z" fill="#dc4a38" /><path d="M36 32L16.100 20.500A23 23 0 0 0 36 55L45.500 38Z" fill="#4aa155" /><circle cx="36" cy="32" r="11" fill="#fff" /><circle cx="36" cy="32" r="9" fill="#3f7cec" />
          {:else if app === 'slack'}
            <rect x="9" y="5" width="54" height="54" rx="12" fill="#fff" /><g stroke-width="7.500" stroke-linecap="round"><path d="M31 17V17.100M21 27H31" stroke="#5dc6ee" /><path d="M41 17V27M51 27H51.100" stroke="#46b07f" /><path d="M41 37H51M41 47V47.100" stroke="#e7b13b" /><path d="M21 37H21.100M31 37V47" stroke="#d42b5e" /></g>
          {:else if app === 'photos'}
            <rect x="9" y="5" width="54" height="54" rx="12" fill="#fbfbfb" />
            {#each petals as c, i}<rect x="29.500" y="9" width="13" height="22" rx="6.500" fill={c} opacity=".85" transform="rotate({i * 45} 36 32)" />{/each}
          {:else if app === 'creative'}
            <g clip-path="url(#tile)"><rect x="9" y="5" width="54" height="54" fill="#e8703c" />
              {#each glows as [x, y, c]}<circle cx={x} cy={y} r="14" fill={c} filter="url(#soft)" />{/each}
            </g>
            <path d="M37 46H30A13.500 13.500 0 0 1 26 20A15 15 0 0 1 55 31A12 12 0 0 1 43 46Q38 46 35 41L29 34A5 5 0 0 1 36 27L43 36A5 5 0 0 0 49 30Q45 22 37 21" fill="none" stroke="#fff" stroke-width="3.600" transform="translate(5 5) scale(.85)" />
          {/if}
        </svg>
        {#if running.includes(app)}<i></i>{/if}
      </div>
    {/each}
    <div class="rule"></div>
    {#each recent as item}
      <div class="app">
        <svg width="72" height="64" viewBox="0 0 72 64">
          {#if item === 'file'}
            <rect x="16" y="7" width="44" height="36" rx="3" fill="#4aa3dc" /><path d="M15 4H40L57 22V63H15Z" fill="#f4f4f4" /><path d="M40 4Q43 18 41 21Q50 20 57 22Z" fill="#fff" stroke="#c4c4c4" />
          {:else if item === 'win1'}
            <rect x="4" y="13" width="64" height="37" fill="#ececec" />
          {:else if item === 'win2'}
            <rect x="4" y="13" width="64" height="37" fill="#f1f1f1" /><rect x="4" y="16" width="55" height="34" fill="#0d0d0d" /><path d="M4 27H58V41H4Z" fill="#e4e6e8" /><path d="M17 27V41M31 27V41M45 27V41M4 34H58" stroke="#222" /><path d="M8 43h9v6H8zM22 43h9v6h-9z" fill="#2f7a4c" /><text x="5" y="25" font-size="6" font-weight="700" fill="#fff">Prozessgalerie</text>
          {:else if item === 'win3'}
            <rect x="4" y="16" width="64" height="33" fill="#f2eeee" /><path d="M8 22H36M8 29H34M8 36H38M8 43H32" stroke="#d5cdcf" stroke-width="2" stroke-dasharray="5 2" /><path d="M44 21H66M42 25H66M44 29H64M44 33H60" stroke="#777" stroke-width="1.800" />
          {:else if item === 'win4'}
            <rect x="4" y="6" width="64" height="52" fill="#f8f8f8" /><rect x="20" y="10" width="30" height="41" fill="#a5a7a4" /><rect x="24" y="14" width="20" height="30" fill="#b9b5ad" /><path d="M5 55H44" stroke="#333" stroke-width="4" stroke-dasharray="4 2" />
          {:else}
            <path d="M12 8L60 8L54 57Q53 62 47 62H25Q19 62 18 57Z" fill="url(#trash)" opacity=".9" /><path d="M13 10Q16 2 24 4Q30-4 38 2Q46-4 51 3Q60 2 60 11Q50 16 36 15T13 10Z" fill="#d7dadd" /><path d="M18 8l6 5 3-7zM34 4l5 8 5-6zM48 10l7-4 1 5zM27 12l5-6 2 7z" fill="#444e59" /><path d="M22 20L27 56M36 18V58M50 20L46 56" stroke="#cfcfd1" stroke-width="1.500" />
          {/if}
          {#if item === 'win1' || item === 'win2'}
            <rect x="47" y="42" width="20" height="20" rx="4" fill="#fff" /><circle cx="57" cy="52" r="8" fill="#e9b93e" /><path d="M57 52L50 48A8 8 0 0 1 64 48Z" fill="#d94a3a" /><path d="M57 52L50 48A8 8 0 0 0 57 60Z" fill="#46a052" /><circle cx="57" cy="52" r="3.600" fill="#3f7cec" stroke="#fff" />
          {:else if item === 'win3'}
            <rect x="46" y="42" width="20" height="20" rx="4" fill="#e3e8f1" /><path d="M50 42H58Q55 50 58 62H50Q46 62 46 58V46Q46 42 50 42Z" fill="#3c95ee" /><path d="M50 55Q56 59 62 55M51 48V50M61 48V50" stroke="#17263f" fill="none" />
          {:else if item === 'win4'}
            <rect x="46" y="42" width="20" height="20" rx="4" fill="url(#green)" /><path d="M49 59L50.500 55A6.500 6.500 0 1 1 53 58Z" fill="none" stroke="#fff" stroke-width="1.600" /><path d="M54 49Q52 55 59 55" stroke="#fff" stroke-width="2" fill="none" />
          {/if}
        </svg>
      </div>
    {/each}
  </nav>
</div>

<style>
  :global(body) { margin: 0; background: #000; }
  .desktop { position: relative; width: 3584px; height: 2240px; overflow: hidden; display: flex; flex-direction: column; font-family: Inter, "Liberation Sans", sans-serif; }
  .wallpaper { position: absolute; inset: 0; width: 3584px; height: 2240px; }
  svg { flex: none; display: block; overflow: visible; }

  .menubar { position: relative; z-index: 2; height: 49px; box-sizing: border-box; padding-bottom: 2px; border-bottom: 1px solid #3a5f95; background: #426fb0; display: flex; align-items: center; color: #eef2f8; font-size: 26px; letter-spacing: -0.35px; white-space: nowrap; }
  .menubar > svg, .status svg, .menu, .menubar b, .clock { filter: drop-shadow(0 3px 4px rgba(20, 40, 80, .3)); }
  .apple { width: 28px; height: 34px; margin: 0 38px 0 40px; }
  .menubar b { width: 142px; font-weight: 700; letter-spacing: -0.9px; }
  .status { margin-left: auto; display: flex; align-items: center; }
  .clock { width: 264px; padding-left: 16px; box-sizing: border-box; display: flex; gap: 16px; font-size: 27px; letter-spacing: 0.45px; }

  .window { position: relative; height: 2082px; border-radius: 20px 20px 22px 22px; overflow: hidden; display: flex; flex-direction: column; background: #ededed; box-shadow: 0 0 2px 1px #37506f, 0 10px 30px rgba(0, 0, 0, .4); }
  .tabs { height: 85px; background: linear-gradient(#eceef1 0 2px, #dee0e4 3px); display: flex; align-items: center; }
  .lights { display: flex; gap: 16px; padding: 4px 0 0 42px; width: 144px; box-sizing: content-box; }
  .lights i { width: 24px; height: 24px; border-radius: 50%; }
  .close { background: #ec6a5e; }
  .min { background: #f4bf4f; }
  .max { background: #61c554; }
  .tab { position: relative; align-self: flex-end; width: 480px; height: 68px; box-sizing: border-box; background: #fff; border-radius: 16px 16px 0 0; display: flex; align-items: center; padding: 0 24px 0 26px; gap: 18px; font-size: 23.700px; letter-spacing: -0.05px; color: #3c4043; }
  .tab::before, .tab::after { content: ""; position: absolute; bottom: 0; width: 16px; height: 16px; }
  .tab::before { left: -16px; background: radial-gradient(circle at 0 0, transparent 15.500px, #fff 16px); }
  .tab::after { right: -16px; background: radial-gradient(circle at 100% 0, transparent 15.500px, #fff 16px); }
  .x { margin-left: auto; }
  .plus { margin-left: 31px; margin-top: 16px; }
  .chev { margin-left: auto; margin-right: 34px; margin-top: 16px; }

  .toolbar { height: 74px; box-sizing: border-box; padding: 0 12px 1px; border-bottom: 2px solid #dcdee1; background: #fff; display: flex; align-items: center; }
  .nav, .act { width: 64px; height: 64px; fill: none; stroke: #5f6368; stroke-width: 3; }
  .gt { stroke: #8e9195; }
  .omnibox { flex: 1; height: 56px; margin: 0 12px; border-radius: 28px; background: #f1f3f4; display: flex; align-items: center; padding: 0 4px 0 22px; color: #5f6368; font-size: 27.600px; letter-spacing: 0.3px; }
  .url { flex: 1; margin-left: 18px; }
  .url em { font-style: normal; color: #202124; }

  .view { height: 1894px; display: flex; }
  .page { width: 3554px; background: #000; display: grid; overflow: hidden; }
  .page > * { grid-area: 1 / 1; }
  .canvas { width: 3554px; height: 1894px; font-family: "Noto Sans", sans-serif; overflow: hidden; white-space: pre; }
  .panel { width: 760px; height: 1894px; display: flex; flex-direction: column; justify-content: space-between; overflow: hidden; box-sizing: border-box; padding-top: 50px; }
  .select { width: 300px; height: 73px; margin-left: 90px; box-sizing: border-box; padding-left: 16px; background: #fff; color: #000; font: 29px/73px "Noto Sans", sans-serif; }
  .switches { display: grid; grid-template-columns: 341px 1fr; grid-auto-rows: 200.600px; height: 738px; margin-left: 84px; color: #fff; font: 500 30px/40px Quicksand, Lato, sans-serif; }
  .switch { display: flex; flex-direction: column; gap: 16px; padding-top: 4px; box-sizing: border-box; }
  .switch span { padding-left: 2px; }
  .track { width: 144px; height: 76px; border-radius: 38px; box-sizing: border-box; padding: 12px 13px 0 16px; background: #404040; display: flex; }
  .track i { width: 51px; height: 49px; border-radius: 50%; background: #aeaeae; }
  .on .track { background: #a0fcd9; justify-content: flex-end; }
  .on .track i { background: #d7fdee; }

  .vbar { width: 30px; background: #fafafa; padding: 180px 0 0 8px; box-sizing: border-box; }
  .vbar i { display: block; width: 16px; height: 361px; border-radius: 8px; background: #c1c1c1; }
  .hbar { flex: 1; box-sizing: border-box; border-top: 2px solid #dedede; background: linear-gradient(#f0f0f0, #dedede); padding: 6px 0 0 6px; }
  .hbar i { display: block; width: 2924px; height: 16px; border-radius: 8px; background: #b3b3b3; }

  .dock { position: absolute; z-index: 3; left: 55px; top: 2140px; width: 3476px; height: 90px; box-sizing: border-box; border: 2px solid rgba(225, 210, 205, .6); border-radius: 24px; padding: 0 3.200px; display: flex; background: linear-gradient(90deg, #807973 0, #a2968f 5%, #bda9a3 14%, #ccb7b0 24%, #d1b1a5 45%, #cfa996 62%, #b3a595 67%, #a3a69a 72%, #a9a79b 76%, #d7a48e 81%, #c7ab9c 86%, #b5a69f 90%, #c8a692 95%, #ad9892 100%); }
  .app { width: 71.500px; height: 86px; display: flex; flex-direction: column; align-items: center; padding-top: 8px; box-sizing: border-box; }
  .app i { width: 8px; height: 8px; margin-top: 4px; border-radius: 50%; background: #3a2218; }
  .rule { width: 2px; height: 66px; margin: 10px 14px 0 16px; background: rgba(90, 75, 70, .55); }
</style>
